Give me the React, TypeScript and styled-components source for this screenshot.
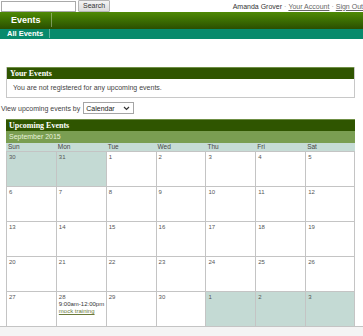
import React from "react";
import styled, { createGlobalStyle } from "styled-components";

const GlobalStyle = createGlobalStyle`
  html, body {
    margin: 0;
    padding: 0;
    background: #ffffff;
    font-family: "Liberation Sans", Arial, sans-serif;
    color: #333;
  }
`;

const Page = styled.div`
  width: 363px;
  height: 336px;
  overflow: hidden;
  display: flex;
  flex-direction: column;
`;

const TopRow = styled.div`
  height: 13px;
  display: flex;
  align-items: center;
  justify-content: space-between;
  padding-left: 1px;
  white-space: nowrap;
`;

const SearchBox = styled.div`
  display: flex;
  align-items: center;
  gap: 2px;
`;

const SearchInput = styled.div`
  width: 73px;
  height: 9px;
  border: 1px solid #a9a9a9;
  background: #fff;
`;

const SearchButton = styled.div`
  height: 10px;
  padding: 0 4px;
  border: 1px solid #b5b5b5;
  border-radius: 1px;
  background: linear-gradient(#f4f4f4, #dcdcdc);
  font-size: 7px;
  line-height: 10px;
  color: #333;
`;

const UserLinks = styled.div`
  font-size: 7px;
  color: #333;
  span.sep {
    color: #999;
    margin: 0 2px;
  }
  a {
    color: #666;
    text-decoration: underline;
  }
`;

const NavBar = styled.div`
  height: 19px;
  background: linear-gradient(#4f8a06 0%, #3d7002 45%, #2b4e00 100%);
  display: flex;
  align-items: center;
`;

const NavItem = styled.div<{ $small?: boolean }>`
  color: #fff;
  font-weight: bold;
  font-size: ${(p) => (p.$small ? "7.5px" : "9px")};
  padding: 0 ${(p) => (p.$small ? "6px" : "10px")} 0 ${(p) => (p.$small ? "7px" : "11px")};
  border-right: 1px solid rgba(255, 255, 255, 0.35);
  line-height: ${(p) => (p.$small ? "9px" : "14px")};
`;

const SubNav = styled.div`
  height: 12px;
  background: #088a6c;
  display: flex;
  align-items: center;
`;

const Content = styled.div`
  padding: 28px 8px 0 6px;
  display: flex;
  flex-direction: column;
  flex: 1;
`;

const Panel = styled.div`
  border: 1px solid #c8c8c8;
  border-top: none;
`;

const PanelHeader = styled.div`
  height: 11px;
  background: #2f5500;
  border-top: 1px solid #6f8f45;
  color: #fff;
  font-family: "Liberation Serif", "Times New Roman", serif;
  font-weight: bold;
  font-size: 8px;
  line-height: 11px;
  padding-left: 3px;
`;

const PanelBody = styled.div`
  height: 18px;
  font-size: 7px;
  line-height: 18px;
  padding-left: 6px;
  color: #444;
`;

const ViewRow = styled.div`
  display: flex;
  align-items: center;
  gap: 3px;
  margin: 4px 0 5px -5px;
  font-size: 7px;
  color: #444;
`;

const SelectBox = styled.div`
  width: 44px;
  height: 10px;
  border: 1px solid #a5a5a5;
  display: flex;
  align-items: center;
  justify-content: space-between;
  padding: 0 3px 0 2px;
  font-size: 7px;
  color: #222;
`;

const MonthBar = styled.div`
  height: 12px;
  background: #7a9e52;
  color: #e8f2dc;
  font-size: 7px;
  line-height: 12px;
  padding-left: 3px;
`;

const Grid = styled.div`
  display: grid;
  grid-template-columns: repeat(7, 1fr);
  grid-template-rows: 8px repeat(5, 35px);
`;

const DayHead = styled.div`
  background: #c6dcd6;
  font-size: 6.5px;
  line-height: 8px;
  padding-left: 2px;
  color: #444;
`;

const Cell = styled.div<{ $other?: boolean; $last?: boolean }>`
  background: ${(p) => (p.$other ? "#c4dad4" : "#fff")};
  border-left: 1px solid #c4c4c4;
  border-top: 1px solid #c4c4c4;
  ${(p) => (p.$last ? "border-right: 1px solid #c4c4c4;" : "")}
  font-size: 6px;
  line-height: 7px;
  padding: 2px 0 0 2px;
  color: #555;
`;

const EventTime = styled.div`
  color: #333;
`;

const EventLink = styled.a`
  color: #6b7a3a;
  text-decoration: underline;
`;

const Footer = styled.div`
  height: 10px;
  background: #f4f4f4;
  border-top: 1px solid #c4c4c4;
`;

const days = ["Sun", "Mon", "Tue", "Wed", "Thu", "Fri", "Sat"];

const cells: { n: number; other?: boolean }[] = [
  { n: 30, other: true },
  { n: 31, other: true },
  ...Array.from({ length: 30 }, (_, i) => ({ n: i + 1 })),
  { n: 1, other: true },
  { n: 2, other: true },
  { n: 3, other: true },
];

const Chevron = () => (
  <svg width="7" height="5" viewBox="0 0 7 5" fill="none">
    <path d="M1 1l2.5 2.5L6 1" stroke="#333" strokeWidth="1.2" />
  </svg>
);

export default function App() {
  return (
    <Page>
      <GlobalStyle />
      <TopRow>
        <SearchBox>
          <SearchInput />
          <SearchButton>Search</SearchButton>
        </SearchBox>
        <UserLinks>
          Amanda Grover<span className="sep">·</span>
          <a>Your Account</a>
          <span className="sep">·</span>
          <a>Sign Out</a>
        </UserLinks>
      </TopRow>
      <NavBar>
        <NavItem>Events</NavItem>
      </NavBar>
      <SubNav>
        <NavItem $small>All Events</NavItem>
      </SubNav>
      <Content>
        <Panel>
          <PanelHeader>Your Events</PanelHeader>
          <PanelBody>You are not registered for any upcoming events.</PanelBody>
        </Panel>
        <ViewRow>
          View upcoming events by
          <SelectBox>
            Calendar
            <Chevron />
          </SelectBox>
        </ViewRow>
        <div>
          <PanelHeader>Upcoming Events</PanelHeader>
          <MonthBar>September 2015</MonthBar>
          <Grid>
            {days.map((d) => (
              <DayHead key={d}>{d}</DayHead>
            ))}
            {cells.map((c, i) => (
              <Cell key={i} $other={c.other} $last={i % 7 === 6}>
                {c.n}
                {i === 29 && (
                  <>
                    <EventTime>9:00am-12:00pm</EventTime>
                    <EventLink>mock training</EventLink>
                  </>
                )}
              </Cell>
            ))}
          </Grid>
        </div>
      </Content>
      <Footer />
    </Page>
  );
}
